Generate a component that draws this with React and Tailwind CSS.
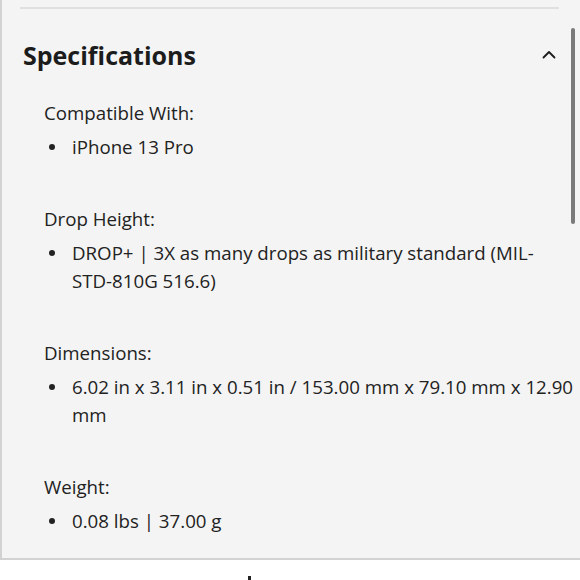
import { useState } from "react"

const specs = [
  { label: "Compatible With:", items: [<>iPhone 13 Pro</>] },
  {
    label: "Drop Height:",
    items: [
      <>
        DROP+ | 3X as many drops as military standard (MIL-
        <span className="whitespace-nowrap">STD-810G</span> 516.6)
      </>,
    ],
  },
  {
    label: "Dimensions:",
    items: [<>6.02 in x 3.11 in x 0.51 in / 153.00 mm x 79.10 mm x 12.90 mm</>],
  },
  { label: "Weight:", items: [<>0.08 lbs | 37.00 g</>] },
]

function ChevronUp() {
  return (
    <svg width="16" height="16" viewBox="0 0 16 16" fill="none" className="text-[#1c1c1c]">
      <path d="M2.5 10.5 8 5l5.5 5.5" stroke="currentColor" strokeWidth="1.8" strokeLinecap="round" strokeLinejoin="round" />
    </svg>
  )
}

export default function App() {
  const [open, setOpen] = useState(true)

  return (
    <div className="w-[580px] h-[580px] overflow-hidden bg-white font-['Open_Sans',sans-serif] text-[#222]">
      <div className="relative h-[560px] bg-[#f4f4f4] border-l-2 border-b-2 border-[#d2d2d2]">
        <div className="pt-[7px] pl-[18px]">
          <div className="w-[539px] h-[2px] bg-[#e0e0e0]" />
        </div>

        <button
          onClick={() => setOpen(!open)}
          className="mt-[30px] w-full flex items-center justify-between pl-[21px] pr-[23px] text-left"
        >
          <h2 className="text-[25px] leading-[32px] font-bold text-[#1c1c1c]">Specifications</h2>
          <ChevronUp />
        </button>

        {open && (
          <div className="mt-[28px] pl-[42px] flex flex-col gap-[44px]">
            {specs.map((s) => (
              <div key={s.label} className="flex flex-col gap-[6px]">
                <div className="text-[18.7px] leading-[28px]">{s.label}</div>
                <ul className="w-[557px]">
                  {s.items.map((it, i) => (
                    <li key={i} className="flex text-[18.7px] leading-[28px]">
                      <span className="w-[28px] shrink-0 pt-[11px]">
                        <span className="block ml-[5px] w-[6px] h-[6px] rounded-full bg-[#222]" />
                      </span>
                      <span>{it}</span>
                    </li>
                  ))}
                </ul>
              </div>
            ))}
          </div>
        )}

        <div className="absolute right-[5px] top-[28px] w-[4px] h-[196px] rounded-full bg-[#7a7a7a]" />
      </div>
      <div className="pl-[248px] pt-[16px]">
        <div className="w-[3px] h-[4px] bg-[#222]" />
      </div>
    </div>
  )
}
